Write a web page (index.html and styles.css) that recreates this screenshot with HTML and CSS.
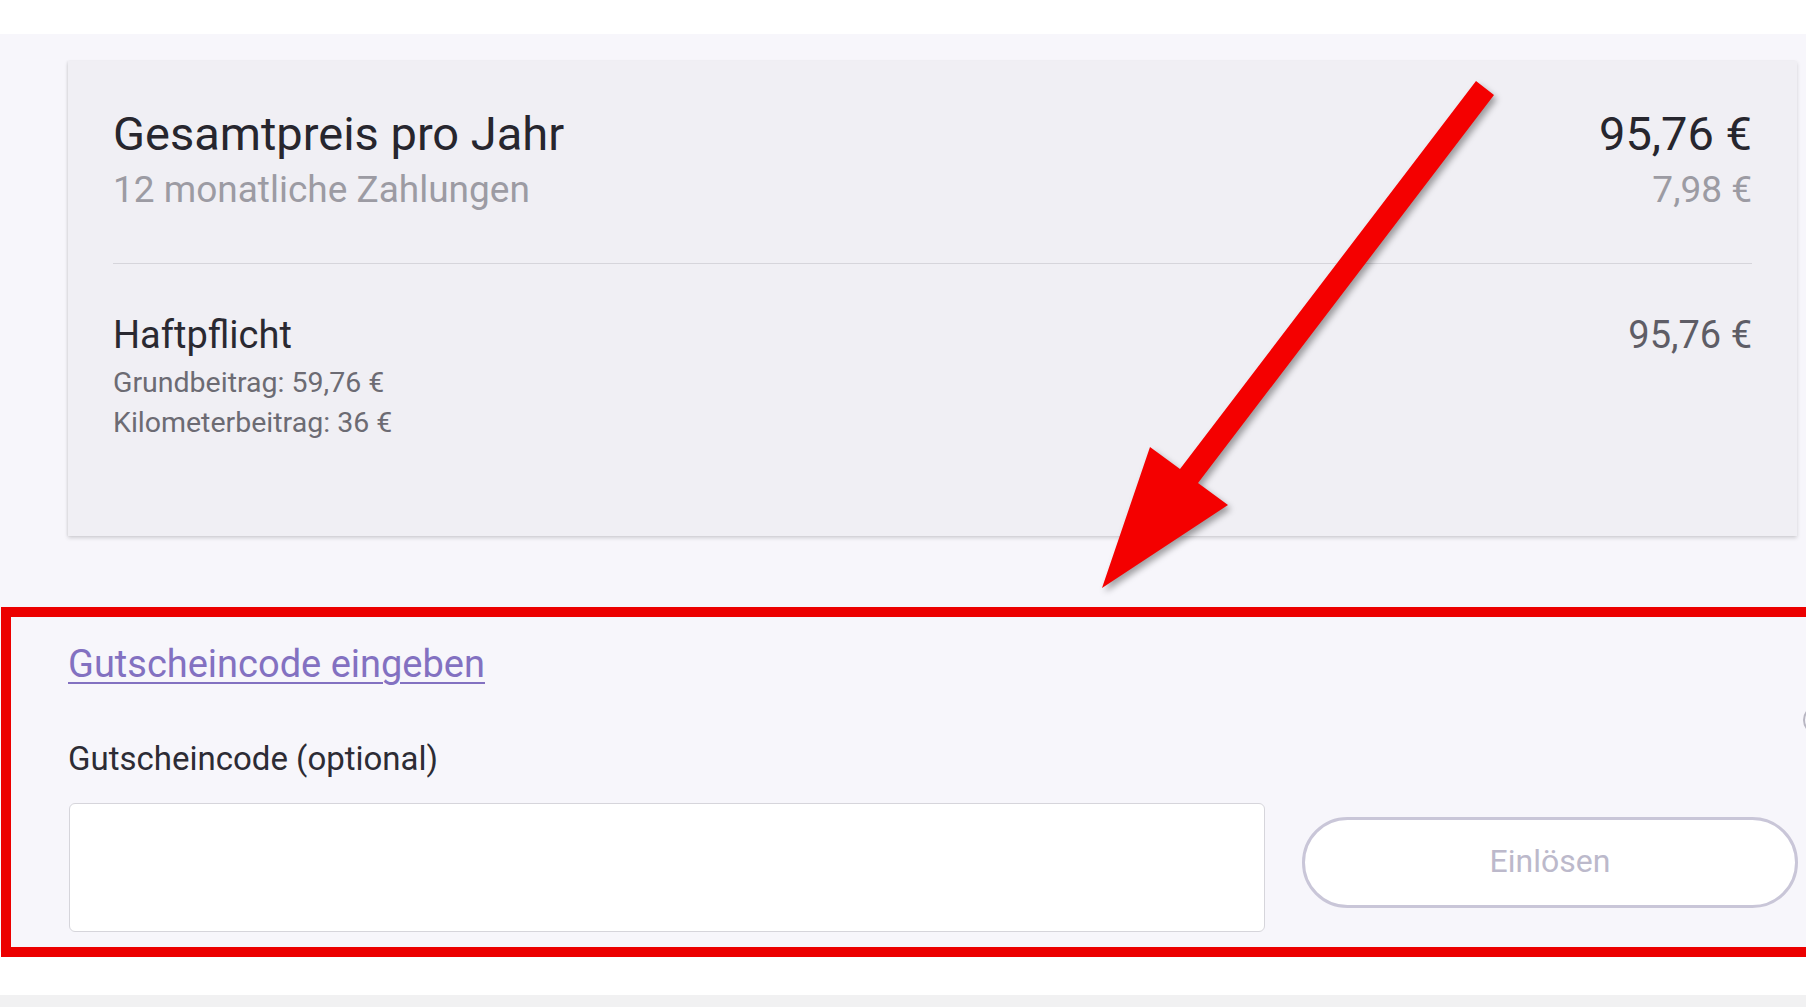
FILE: index.html
```html
<!DOCTYPE html>
<html lang="de">
<head>
	<meta charset="UTF-8">
	<title>Gesamtpreis</title>
	<link rel="stylesheet" href="styles.css">
</head>
<body>
	<div class="topbar"></div>
	<section class="main">
		<div class="card">
			<div class="row">
				<div>
					<p class="title">Gesamtpreis pro Jahr</p>
					<p class="sub">12 monatliche Zahlungen</p>
				</div>
				<div class="right">
					<p class="title">95,76 €</p>
					<p class="sub">7,98 €</p>
				</div>
			</div>
			<hr class="divider">
			<div class="row">
				<div>
					<p class="item">Haftpflicht</p>
					<p class="detail first">Grundbeitrag: 59,76 €</p>
					<p class="detail">Kilometerbeitrag: 36 €</p>
				</div>
				<p class="item price">95,76 €</p>
			</div>
		</div>
		<div class="voucher">
			<a href="javascript:;" class="link">Gutscheincode eingeben</a>
			<label class="label" for="code">Gutscheincode (optional)</label>
			<div class="form">
				<input type="text" id="code" class="input">
				<button class="btn">Einlösen</button>
			</div>
		</div>
		<span class="info"></span>
	</section>
	<div class="gap"></div>
	<div class="bottom"></div>

	<!-- Markierung aus dem Screenshot -->
	<div class="mark"></div>
	<svg class="arrow" width="1806" height="1007" viewBox="0 0 1806 1007">
		<polygon points="1476,81 1180,469 1150,447 1102,588 1228,505 1198,483 1494,95" fill="#f40000"/>
	</svg>
</body>
</html>
```

FILE: styles.css
```css
*{margin: 0;padding: 0;box-sizing: border-box;}
html,body{overflow: hidden;}
body{width: 1806px;height: 1007px;background: #fff;font-family: Roboto, "Liberation Sans", Arial, sans-serif;color: #2a2931;position: relative;}
.topbar{height: 34px;background: #fff;}
.main{background: #f7f6fb;padding: 27px 9px 20px 68px;position: relative;}
.card{background: #f0eff4;padding: 47px 45px 93px 45px;box-shadow: 0 2px 4px rgba(0,0,0,0.16), -1px 0 2px rgba(0,0,0,0.05);}
.row{display: flex;justify-content: space-between;align-items: flex-start;}
.right{text-align: right;}
.title{font-size: 47px;line-height: 52px;color: #27262e;}
.sub{font-size: 37px;line-height: 40px;margin-top: 10px;color: #9c9ba3;}
.divider{border: none;border-top: 1px solid #d6d5db;margin: 53px 0 49px 0;}
.item{font-size: 38px;line-height: 44px;color: #2a2931;}
.price{color: #5e5d66;}
.detail{font-size: 28.5px;line-height: 40px;color: #6c6b73;}
.detail.first{margin-top: 6px;}
.voucher{padding-top: 105px;display: flex;flex-direction: column;align-items: flex-start;}
.link{font-size: 38px;line-height: 46px;color: #8371c1;text-decoration: underline;text-decoration-thickness: 2px;text-underline-offset: 5px;}
.label{font-size: 33px;line-height: 40px;margin-top: 52px;color: #2d2c35;}
.form{display: flex;align-items: flex-start;gap: 37px;margin-top: 24px;margin-left: 1px;}
.input{width: 1196px;height: 129px;background: #fff;border: 1px solid #d6d5db;border-radius: 6px;}
.btn{width: 496px;height: 91px;margin-top: 14px;padding-bottom: 4px;background: #fff;border: 3px solid #c9c6d8;border-radius: 46px;font-family: Roboto, "Liberation Sans", Arial, sans-serif;font-size: 32px;color: #bcb9cb;}
.info{position: absolute;left: 1803px;top: 671px;width: 30px;height: 30px;border: 2px solid #b8b6c2;border-radius: 50%;}
.gap{height: 43px;background: #fff;}
.bottom{height: 20px;background: #f1f1f2;}
.mark{position: absolute;left: 1px;top: 607px;width: 1830px;height: 350px;border: 10px solid #ec0000;}
.arrow{position: absolute;left: 0;top: 0;pointer-events: none;filter: drop-shadow(3px 4px 3px rgba(0,0,0,0.35));}
```
